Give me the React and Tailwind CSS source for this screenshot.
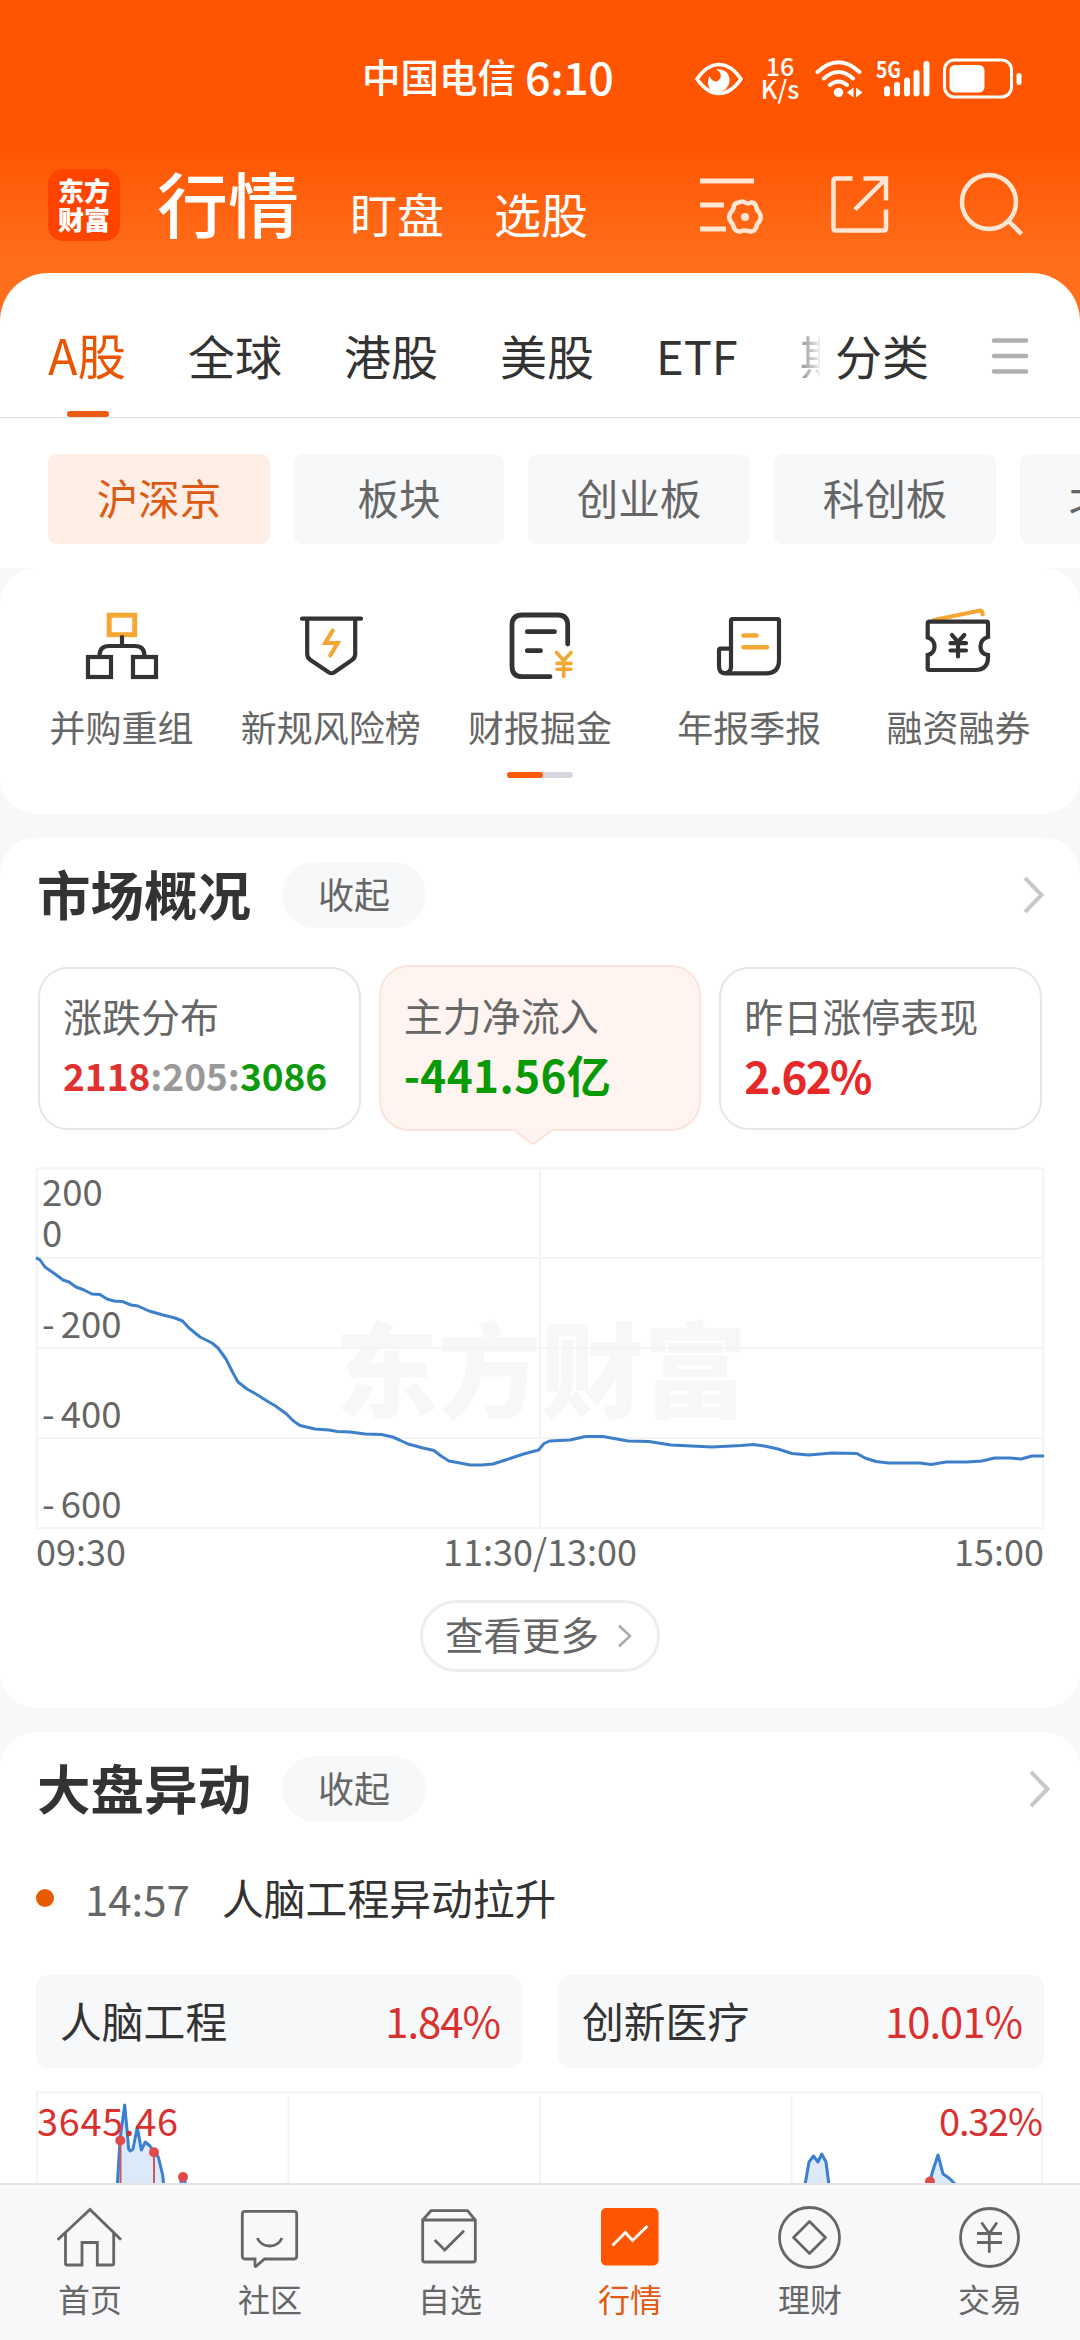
import { useState } from 'react';
import clsx from 'clsx';

const marketTabs = [
  { name: 'A股', width: 'w-[140px]' },
  { name: '全球', width: 'w-[156px]' },
  { name: '港股', width: 'w-[156px]' },
  { name: '美股', width: 'w-[156px]' },
  { name: 'ETF', width: 'w-[144px]' },
];

const boards = [
  { name: '沪深京', width: 'w-[222px]' },
  { name: '板块', width: 'w-[210px]' },
  { name: '创业板', width: 'w-[222px]' },
  { name: '科创板', width: 'w-[222px]' },
  { name: '北交所', width: 'w-[222px]' },
];

// x in page pixels, y from the top of the chart grid
const flowPoints = [
  [36, 89.6], [40, 92], [45, 99], [55, 106], [63, 112], [69, 114], [76, 119], [84, 122], [92, 126], [100, 126.4],
  [107, 131], [114, 133], [122, 133.4], [131, 137], [138, 138], [149, 143], [163, 147], [175, 150], [182.5, 153],
  [189, 160], [200, 169], [212, 175], [218, 180], [226, 191], [233, 205], [238, 214], [247, 221], [256, 226],
  [267, 233], [275.5, 238], [286.5, 246], [293.5, 253], [300, 257.5], [315, 261], [329, 262], [337.5, 263.5],
  [350, 264], [365, 266], [381.5, 266.5], [392.6, 269], [399.5, 272], [408, 276], [423, 280], [434, 282.5],
  [441, 288], [449, 293], [460, 295], [470, 297], [482, 297], [493, 296], [505.5, 292], [523.5, 286], [538.6, 282],
  [544, 275.5], [549.6, 273], [570, 272], [585.5, 268.5], [603, 268.5], [628, 273], [649, 273.5], [671, 277],
  [712, 279], [741, 277.5], [753.5, 276.5], [764.5, 278], [778, 281], [792, 285.5], [808.6, 287], [832, 285],
  [857, 285.5], [865, 290], [876, 293.5], [888.5, 295], [920, 295], [931, 296.5], [946, 294], [967, 294],
  [982, 293], [994.6, 290], [1010, 290], [1021, 291], [1032, 288], [1044, 288],
];

const toPoints = (list) => list.map((p) => p.join(',')).join(' ');

const StatusBar = () => (
  <div className="flex h-[157px] items-center text-white">
    <div className="ml-[362px] flex w-[333px] items-center pb-[6px]">
      <span className="text-[38.5px] font-medium leading-none">中国电信</span>
      <span className="ml-[9px] text-[45px] font-medium leading-none tracking-[-0.5px]">6:10</span>
    </div>
    <svg className="h-10 w-12" viewBox="0 0 48 40" fill="none">
      <path d="M2 20Q12 5.500 24 5.500T46 20Q36 34.500 24 34.500T2 20Z" stroke="#fff" strokeWidth="3.600" strokeLinejoin="round" />
      <path d="M21 10.500Q27 13 25.500 19Q22 24.500 18 21.500Q15.500 20 14.500 17Q11 24 15 30Q24 36.500 31 30Q37 23 33 15Q29 9.500 21 10.500Z" fill="#fff" />
    </svg>
    <div className="ml-[16px] flex w-[42px] flex-col items-center pb-[3px] text-[25px] font-medium leading-[23px]">
      <span>16</span>
      <span>K/s</span>
    </div>
    <svg className="ml-[14px] h-10 w-12" viewBox="0 0 48 40" fill="none" stroke="#fff" strokeWidth="4" strokeLinecap="round">
      <path d="M2.500 13Q23.500-6.500 44.500 13M9 19.500Q23.500 6.500 38 19.500M15 26Q23.500 19 32 26" />
      <circle cx="23.500" cy="33.500" r="4.700" fill="#fff" stroke="none" />
      <path d="M38.500 28.500v10l-6.500-5zM41 28.500v10l6.500-5z" fill="#fff" stroke="none" />
    </svg>
    <svg className="ml-[13px] h-10 w-14" viewBox="0 0 56 40">
      <text x="0" y="19" fontSize="23" fontWeight="700" textLength="25" lengthAdjust="spacingAndGlyphs" fill="#fff">5G</text>
      <g stroke="#fff" strokeWidth="6" strokeLinecap="round">
        <path d="M11 30v4.500M21 26v8.500M31 21.500v13M40.500 14v20.500M50.500 5v29.500" />
      </g>
    </svg>
    <svg className="ml-[11px] h-[42px] w-20" viewBox="0 0 80 42">
      <rect x="1.500" y="2" width="67" height="37" rx="10" fill="none" stroke="#fff" strokeWidth="3" />
      <rect x="6.500" y="7" width="35" height="27.500" rx="5.500" fill="#fff" />
      <rect x="73.500" y="15" width="5" height="12" rx="2.500" fill="#fff" />
    </svg>
  </div>
);

const Header = () => (
  <header className="h-[321px] bg-linear-to-b from-[#ff5500] from-45% to-[#ff6e1a] to-82%">
    <StatusBar />
    <div className="flex h-24 items-center pl-12 text-white">
      <div className="flex h-[72px] w-[72px] flex-col items-center justify-center rounded-[15px] bg-[#ff4400] pb-[2px] text-[26px] font-black leading-[29px]">
        <span>东方</span>
        <span>财富</span>
      </div>
      <h1 className="ml-[37px] pb-[7px] text-[71px] font-medium leading-none">行情</h1>
      <span className="ml-[51px] pt-[14px] text-[47px] leading-none">盯盘</span>
      <span className="ml-[50px] pt-[14px] text-[47px] leading-none">选股</span>
      <svg className="ml-[111px] h-[66px] w-[66px]" viewBox="0 0 66 66" fill="none" stroke="#ffe6d5" strokeWidth="5">
        <path d="M1 9H55M1 33H25M1 57H27" />
        <path
          d="M40 30.500Q43 28.500 46 30.500T52 30.500Q55.500 30 57 34Q57.500 38 60 40Q63.500 45 60 50Q57.500 52 57.500 55Q55.500 60 51 59.500Q46 57.500 41 59.500Q36.500 60 34.500 55Q34.500 52 32 50Q28.500 45 32 40Q34.500 38 34.800 34Q36 30.500 40 30.500Z"
          strokeWidth="4.500"
          strokeLinejoin="round"
        />
        <circle cx="46" cy="45" r="4" fill="#ffe6d5" stroke="none" />
      </svg>
      <svg className="ml-[63px] h-[66px] w-[66px]" viewBox="0 0 66 66" fill="none" stroke="#ffe6d5" strokeWidth="4.500">
        <path d="M24.500 6.500H7.500Q5.500 6.500 5.500 8.500V56Q5.500 58.500 7.500 58.500H56Q58 58.500 58 56V37.500M35.500 6.500H58V28.500M57 7.500L27 37.500" />
      </svg>
      <svg className="ml-[62px] h-[70px] w-[70px]" viewBox="0 0 70 70" fill="none" stroke="#ffe6d5" strokeWidth="4.500">
        <circle cx="33" cy="32" r="27" />
        <path d="M52 50.500L65.500 64" />
      </svg>
    </div>
  </header>
);

const MarketTabs = () => {
  const [active, setActive] = useState('A股');

  return (
    <nav className="flex h-[145px] items-center border-b border-[#dedede] pl-12 pt-[18px] text-[47px] leading-none text-[#333]">
      {marketTabs.map((tab) => (
        <div key={tab.name} className={clsx('relative shrink-0', tab.width)} onClick={() => setActive(tab.name)}>
          <span className={active === tab.name ? 'text-[48.5px] text-[#ea5504]' : ''}>{tab.name}</span>
          {active === tab.name && <i className="absolute -bottom-[39px] left-[19px] h-[6px] w-[42px] rounded-full bg-[#ea5b14]" />}
        </div>
      ))}
      <span className="w-[20px] shrink-0 overflow-hidden whitespace-nowrap bg-linear-to-r from-[#909090] to-[#f0f0f0] bg-clip-text text-transparent">期</span>
      <span className="ml-[15px] w-[94px] shrink-0">分类</span>
      <svg className="ml-[61px] mt-[4px] h-10 w-[40px]" viewBox="0 0 40 40" stroke="#b0b0b0" strokeWidth="4.500" strokeLinecap="round">
        <path d="M4 4.500H36M4 20H36M4 35.500H36" />
      </svg>
    </nav>
  );
};

const BoardPills = () => (
  <div className="flex gap-6 overflow-hidden pb-6 pl-12 pt-9">
    {boards.map((board, i) => (
      <div
        key={board.name}
        className={clsx(
          'flex h-[90px] shrink-0 items-center justify-center rounded-[9px] pb-[3px] text-[41.5px] leading-none',
          board.width,
          i === 0 ? 'bg-[#ffeee6] text-[#dd5a14]' : 'bg-[#f7f8fa] text-[#666]'
        )}
      >
        {board.name}
      </div>
    ))}
  </div>
);

const MergerIcon = () => (
  <>
    <rect x="35.200" y="20.200" width="25.500" height="19.500" stroke="#f5a733" strokeWidth="5" />
    <path d="M48 42V51M25.500 61Q25.500 51 35 51H61Q70.500 51 70.500 61" />
    <rect x="14" y="62" width="23" height="20" />
    <rect x="59" y="62" width="23" height="20" />
  </>
);

const RiskIcon = () => (
  <>
    <path d="M19 23.700H78M24.200 24V59Q24.200 63 27.500 65L46 77.500Q48.500 79 51 77.500L69 65Q72.200 63 72.200 59V24" />
    <path d="M49.700 35.500L42.200 48H54.700L47.200 60.500" stroke="#f5a733" />
  </>
);

const ReportIcon = () => (
  <>
    <path d="M75.700 49V30Q75.700 20 66 20H30Q20 20 20 30V71Q20 81.700 30 81.700H58" strokeWidth="4.800" />
    <path d="M35.300 36.700H62.500M35.300 55.700H48.500" strokeWidth="4.800" />
    <path d="M64.500 57.500L71.700 65.500L79 57.500M71.700 65.500V81.500M65 68.400H79M65 74.300H79" stroke="#f5a733" strokeWidth="3.600" />
  </>
);

const SeasonIcon = () => (
  <>
    <path d="M30 72V25.500Q30 24 31.500 24H76.500Q78 24 78 25.500V65Q78 78.300 65 78.300H24Q30 77 30 72" />
    <path d="M29 53.700H19.500Q18 53.700 18 55.500V71Q18 78.300 24 78.300" />
    <path d="M42.500 40.500H55.500M42.500 52.300H66" stroke="#f5a733" strokeWidth="4.600" />
  </>
);

const MarginIcon = () => (
  <>
    <path d="M24 25L69 15.700Q72.500 15 72.700 19.500" stroke="#f5a733" />
    <path d="M19.500 26.700H76.500Q78 26.700 78 28.500V42Q70.500 44 70.500 51.500T78 60V62Q78 75 65 75H19.500Q17.700 75 17.700 73.500V60Q24.500 58.500 24.500 51.500T17.700 42.500V28.500Q17.700 26.700 19.500 26.700Z" />
    <path d="M42 40L48 47L54.300 40M48 47V61.500M40.500 48.200H56M40.500 55.500H56" />
  </>
);

const shortcuts = [
  { label: '并购重组', icon: <MergerIcon /> },
  { label: '新规风险榜', icon: <RiskIcon /> },
  { label: '财报掘金', icon: <ReportIcon /> },
  { label: '年报季报', icon: <SeasonIcon /> },
  { label: '融资融券', icon: <MarginIcon /> },
];

const Shortcuts = () => (
  <section className="h-[246px] rounded-[36px] bg-white px-[17px] pt-[27px]">
    <div className="grid grid-cols-5">
      {shortcuts.map((item) => (
        <div key={item.label} className="flex flex-col items-center">
          <svg className="h-24 w-24" viewBox="0 0 96 96" fill="none" stroke="#333" strokeWidth="4.200" strokeLinecap="round">
            {item.icon}
          </svg>
          <span className="mt-[17px] whitespace-nowrap text-[36px] leading-none text-[#666]">{item.label}</span>
        </div>
      ))}
    </div>
    <div className="mx-auto mt-[28px] h-[6px] w-[66px] rounded-full bg-[#d6d7de]">
      <div className="h-full w-[36px] rounded-full bg-[#fa5a0a]" />
    </div>
  </section>
);

const SectionHeader = ({ title, arrowClass }) => (
  <div className="flex h-[66px] items-center pl-[37px]">
    <h2 className="w-[245px] pb-1 text-[53.5px] font-bold leading-none text-[#333]">{title}</h2>
    <button className="h-[66px] w-36 rounded-full bg-[#f7f8fa] pb-1 text-[36px] leading-none text-[#666]">收起</button>
    <svg className={clsx('ml-auto h-10 w-6', arrowClass)} viewBox="0 0 24 40" fill="none" stroke="#c8c8c8" strokeWidth="4">
      <path d="M3 3L19.500 20L3 37" />
    </svg>
  </div>
);

const FlowChart = () => (
  <svg className="mt-[20px] h-[384px] w-full" viewBox="0 -17 1080 384" fill="none">
    <text x="335" y="242" fontSize="103" fontWeight="900" fill="#f7f7f7" textLength="412">东方财富</text>
    <path d="M36 .500H1044M36 90H1044M36 180H1044M36 270H1044M36 360H1044M36.500 0V360M540 0V360M1043.500 0V360" stroke="#f4f4f4" strokeWidth="2" />
    <g fontSize="36.500" fill="#666">
      <text x="42" y="38">200</text>
      <text x="42" y="79">0</text>
      <text x="42" y="169.500">-<tspan dx="6">200</tspan></text>
      <text x="42" y="259.500">-<tspan dx="6">400</tspan></text>
      <text x="42" y="349.500">-<tspan dx="6">600</tspan></text>
    </g>
    <polyline points={toPoints(flowPoints)} stroke="#3e7fca" strokeWidth="3" strokeLinejoin="round" />
  </svg>
);

const Overview = () => (
  <section className="mt-6 h-[870px] rounded-[36px] bg-white pt-6">
    <SectionHeader title="市场概况" arrowClass="mr-[34px]" />

    <div className="mt-[37px] flex h-[166px] items-center gap-[18px] px-[38px] leading-none">
      <div className="h-[163px] flex-1 rounded-[30px] border-2 border-[#e6e6e6] pl-[23px] pt-[27px]">
        <p className="text-[39px] text-[#666]">涨跌分布</p>
        <p className="mt-[22px] text-[37px] font-bold">
          <span className="text-[#e03030]">2118</span>
          <span className="text-[#999]">:205:</span>
          <span className="text-[#0c990c]">3086</span>
        </p>
      </div>
      <div className="relative h-[166px] flex-1 rounded-[30px] border-2 border-[#fbe4da] bg-[#fff4ef] pl-[23px] pt-[28px]">
        <p className="text-[39px] text-[#666]">主力净流入</p>
        <p className="mt-[18px] text-[44px] font-bold tracking-[0.4px] text-[#079a07]">-441.56亿</p>
        <svg className="absolute left-[132px] top-[161px] h-[17px] w-[40px]" viewBox="0 0 40 17">
          <path d="M0 1.500L18 15Q20 16.500 22 15L40 1.500" fill="#fff4ef" stroke="#fbe4da" strokeWidth="2" />
          <path d="M0 0H40V1.500H0Z" fill="#fff4ef" />
        </svg>
      </div>
      <div className="h-[163px] flex-1 rounded-[30px] border-2 border-[#e6e6e6] pl-[23px] pt-[27px]">
        <p className="whitespace-nowrap text-[39px] text-[#666]">昨日涨停表现</p>
        <p className="mt-[18px] text-[44px] font-bold tracking-[-1.6px] text-[#e62828]">2.62%</p>
      </div>
    </div>

    <FlowChart />
    <div className="-mt-[3px] flex justify-between px-9 text-[36px] leading-none text-[#666]">
      <span className="w-[90px]">09:30</span>
      <span>11:30/13:00</span>
      <span className="w-[90px]">15:00</span>
    </div>

    <button className="mx-auto mt-[32px] flex h-[72px] w-[240px] items-center rounded-full border-[3px] border-[#eee] pb-[6px] pl-[22px] text-[38.5px] leading-none text-[#666]">
      查看更多
      <svg className="ml-[18px] mt-[6px] h-6 w-4" viewBox="0 0 16 24" fill="none" stroke="#aaa" strokeWidth="2.500">
        <path d="M2 1.500L13 12L2 22.500" />
      </svg>
    </button>
  </section>
);

const IndexChart = () => (
  <svg className="mt-[23px] block h-[92px] w-full" viewBox="0 2091 1080 92" fill="none">
    <path d="M36 2092.500H1043M37 2092V2183M288.500 2095V2183M540 2095V2183M791.500 2095V2183M1042 2092V2183" stroke="#f4f4f4" strokeWidth="2" />
    <g stroke="#3b80cf" strokeWidth="3" fill="#dce9f8" strokeLinejoin="round">
      <path d="M117.300 2185L120 2140L124.700 2105L127 2130L128.700 2149L130.300 2151L133 2149L137.300 2127L141.300 2150L145.300 2142L150 2146L154 2152L158.300 2157L162.700 2175L163.700 2185" />
      <path d="M805 2185L809 2162L813.500 2156L818 2162L821.700 2154L826 2162L829 2185" />
      <path d="M929 2185L933 2170L938 2155L943 2174L949 2178L956 2185" />
      <path d="M181 2185V2181H185V2185" />
    </g>
    <path d="M120.500 2140V2183M154 2152V2183" stroke="#cc5866" strokeWidth="2" />
    <g fill="#e04a4a">
      <circle cx="120.300" cy="2140.500" r="5" />
      <circle cx="154" cy="2152.300" r="5" />
      <circle cx="183" cy="2177" r="5" />
      <circle cx="930" cy="2181.500" r="5" />
    </g>
    <g fontSize="38" fill="#d93030">
      <text x="37" y="2135.500" textLength="141">3645.46</text>
      <text x="939" y="2135.500" textLength="104">0.32%</text>
    </g>
  </svg>
);

const movers = [
  { name: '人脑工程', change: '1.84%' },
  { name: '创新医疗', change: '10.01%' },
];

const Movement = () => (
  <section className="mt-6 h-[451px] rounded-t-[36px] bg-white pt-6">
    <SectionHeader title="大盘异动" arrowClass="mr-[28px]" />
    <div className="mt-[55px] flex h-[42px] items-center pl-9 leading-none">
      <i className="h-[18px] w-[18px] rounded-full bg-[#e65a00]" />
      <span className="ml-[31px] w-[137px] pb-[1px] text-[42px] text-[#666]">14:57</span>
      <span className="pb-[1px] text-[41.8px] text-[#333]">人脑工程异动拉升</span>
    </div>
    <div className="mt-[56px] grid grid-cols-2 gap-9 px-9">
      {movers.map((item) => (
        <div key={item.name} className="flex h-[93px] items-center justify-between rounded-[12px] bg-[#f7f8fa] pb-[1px] pl-6 pr-[22px] text-[41.8px] leading-none">
          <span className="text-[#333]">{item.name}</span>
          <span className="tracking-[-1px] text-[#d93030]">{item.change}</span>
        </div>
      ))}
    </div>
    <IndexChart />
  </section>
);

const tabBar = [
  {
    label: '首页',
    icon: <path d="M3.700 39.700L36 9.500L67 39.700M11.500 33V63.500Q11.500 65 13 65H28V42.500H43.300V65H58Q59.700 65 59.700 63.500V33" />,
  },
  {
    label: '社区',
    icon: <path d="M11 11.300H60Q62.700 11.300 62.700 14V56Q62.700 59 60 59H30.500L22 66.300Q21 67 21 65.500V59H11Q8.300 59 8.300 56V14Q8.300 11.300 11 11.300ZM23.300 38Q27 46 35.700 46T48 38" />,
  },
  {
    label: '自选',
    icon: <path d="M8.700 20L17 10.700H53.500L61.300 20V60Q61.300 62 59 62H11Q8.700 62 8.700 60V20H61.300M20.700 40L30.700 50L50 30.700" />,
  },
  {
    label: '行情',
    active: true,
    icon: (
      <>
        <rect x="7" y="8" width="57.500" height="57.500" rx="5" fill="#ff5500" stroke="none" />
        <path d="M18.500 45.500L31.400 32.500L38.500 40.500L53.400 26" stroke="#fff" />
      </>
    ),
  },
  {
    label: '理财',
    icon: (
      <>
        <circle cx="35.500" cy="37.500" r="30" />
        <path d="M35.500 21.500L51.500 37.500L35.500 53.500L19.500 37.500Z" strokeLinejoin="round" />
      </>
    ),
  },
  {
    label: '交易',
    icon: (
      <>
        <circle cx="35.500" cy="37.500" r="29" />
        <path d="M27.500 22.500L35.300 33.500L43 22.500M35.300 33.500V52.700M23 33.500H48M23 42.500H48" />
      </>
    ),
  },
];

const TabBar = () => (
  <footer className="grid h-[157px] grid-cols-6 border-t-2 border-[#e3e3e5] bg-[#f8f8fa] pt-[15px]">
    {tabBar.map((tab) => (
      <div key={tab.label} className="flex flex-col items-center">
        <svg className="h-[72px] w-[72px]" viewBox="0 0 72 72" fill="none" stroke="#666" strokeWidth="2.800">
          {tab.icon}
        </svg>
        <span className={clsx('mt-[10px] text-[32px] leading-none', tab.active ? 'text-[#e05a10]' : 'text-[#666]')}>{tab.label}</span>
      </div>
    ))}
  </footer>
);

const App = () => (
  <div className="h-[2340px] w-[1080px] overflow-hidden bg-[#f7f8fa] font-['Noto_Sans_CJK_SC',sans-serif]">
    <Header />
    <div className="-mt-12 rounded-t-[48px] bg-white">
      <MarketTabs />
      <BoardPills />
    </div>
    <Shortcuts />
    <Overview />
    <Movement />
    <TabBar />
  </div>
);

export default App;
